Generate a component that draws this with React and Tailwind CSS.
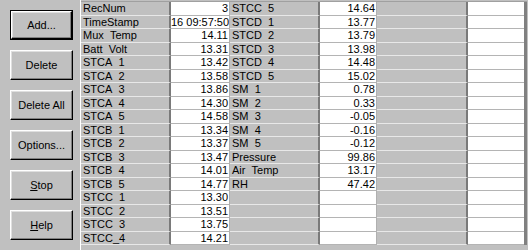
import React from "react";

const col1 = [
  ["RecNum", "3"],
  ["TimeStamp", "16 09:57:50"],
  ["Mux_Temp", "14.11"],
  ["Batt_Volt", "13.31"],
  ["STCA_1", "13.42"],
  ["STCA_2", "13.58"],
  ["STCA_3", "13.86"],
  ["STCA_4", "14.30"],
  ["STCA_5", "14.58"],
  ["STCB_1", "13.34"],
  ["STCB_2", "13.37"],
  ["STCB_3", "13.47"],
  ["STCB_4", "14.01"],
  ["STCB_5", "14.77"],
  ["STCC_1", "13.30"],
  ["STCC_2", "13.51"],
  ["STCC_3", "13.75"],
  ["STCC_4", "14.21"],
];

const col2 = [
  ["STCC_5", "14.64"],
  ["STCD_1", "13.77"],
  ["STCD_2", "13.79"],
  ["STCD_3", "13.98"],
  ["STCD_4", "14.48"],
  ["STCD_5", "15.02"],
  ["SM_1", "0.78"],
  ["SM_2", "0.33"],
  ["SM_3", "-0.05"],
  ["SM_4", "-0.16"],
  ["SM_5", "-0.12"],
  ["Pressure", "99.86"],
  ["Air_Temp", "13.17"],
  ["RH", "47.42"],
  ["", ""],
  ["", ""],
  ["", ""],
  ["", ""],
];

function Label({ text, last }) {
  const parts = text.split("_");
  return (
    <span>
      {parts.map((p, i) => (
        <React.Fragment key={i}>
          {i > 0 && <span className={last ? "" : "text-transparent"}>_</span>}
          {p}
        </React.Fragment>
      ))}
    </span>
  );
}

function Btn({ children, def }) {
  const inner = (
    <div className="w-full h-full flex items-center justify-center bg-[#c0c0c0] border-t border-l border-t-white border-l-white border-b border-r border-b-black border-r-black shadow-[inset_-1px_-1px_0_#808080,inset_1px_1px_0_#dfdfdf]">
      {children}
    </div>
  );
  return (
    <div className={"w-[63px] h-[30px] " + (def ? "border border-black" : "")}>
      {inner}
    </div>
  );
}

export default function App() {
  return (
    <div
      className="w-[528px] h-[250px] bg-[#c0c0c0] flex overflow-hidden text-[11px] leading-[13px] text-black"
      style={{ fontFamily: '"Liberation Sans", Arial, sans-serif' }}
    >
      <div className="w-[80px] shrink-0 flex flex-col gap-[10px] pt-[10px] pl-[10px]">
        <Btn def>Add...</Btn>
        <Btn>Delete</Btn>
        <Btn>Delete All</Btn>
        <Btn>Options...</Btn>
        <Btn>
          <span>
            <span className="underline">S</span>top
          </span>
        </Btn>
        <Btn>
          <span>
            <span className="underline">H</span>elp
          </span>
        </Btn>
      </div>
      <div className="flex flex-col pt-[1px] border-l border-l-white">
        <div className="border-t border-t-[#a0a0a0] flex flex-col">
          {col1.map((r, i) => {
            const last = i === col1.length - 1;
            const r2 = col2[i];
            return (
              <div key={i} className="flex h-[13.5px]">
                <div className="w-[90px] bg-[#c0c0c0] border-b border-b-[#e8e8e8] border-r-2 border-r-[#7a7a7a] pl-[2px] whitespace-nowrap overflow-hidden">
                  <Label text={r[0]} last={last} />
                </div>
                <div className="w-[59px] bg-white border-b border-b-[#b4b4b4] border-r border-r-[#b0b0b0] pr-[1px] text-right whitespace-nowrap overflow-hidden">
                  {r[1]}
                </div>
                <div className="w-[90px] bg-[#c0c0c0] border-b border-b-[#e8e8e8] border-r-2 border-r-[#7a7a7a] pl-[2px] whitespace-nowrap overflow-hidden">
                  <Label text={r2[0]} last={false} />
                </div>
                <div className="w-[57px] bg-white border-b border-b-[#b4b4b4] border-r border-r-[#b0b0b0] pr-[1px] text-right whitespace-nowrap overflow-hidden">
                  {r2[1]}
                </div>
                <div className="w-[91px] bg-[#c0c0c0] border-b border-b-[#e8e8e8] border-r-2 border-r-[#7a7a7a]" />
                <div className="w-[56px] bg-white border-b border-b-[#b4b4b4]" />
                <div className="w-[3px] bg-[#808080]" />
              </div>
            );
          })}
        </div>
      </div>
    </div>
  );
}
